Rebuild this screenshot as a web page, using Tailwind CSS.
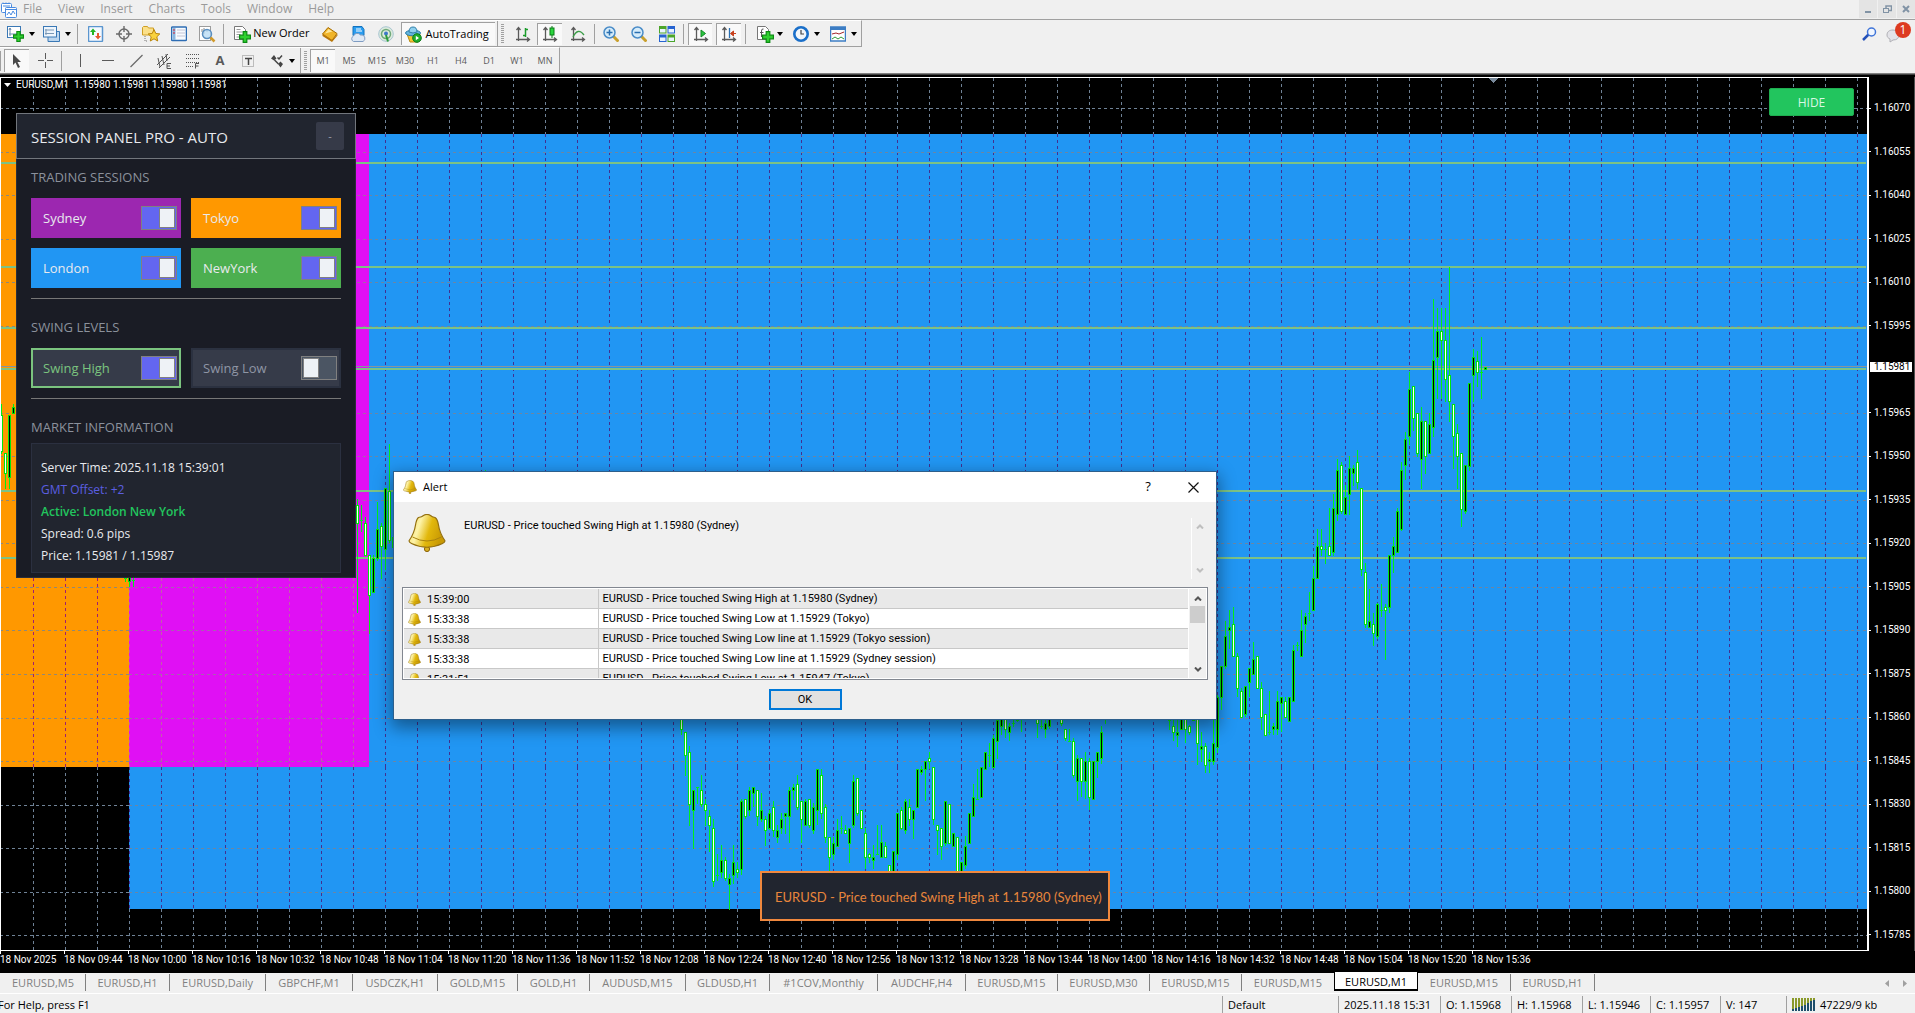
<!DOCTYPE html>
<html lang="en">
  <head>
    <meta charset="UTF-8" />
    <meta name="viewport" content="width=device-width, initial-scale=1.0" />
    <script src="https://cdn.jsdelivr.net/npm/@tailwindcss/browser@4"></script>
    <title>EURUSD,M1</title>
  </head>
  <body class="flex h-screen flex-col overflow-hidden bg-[#f0f0f0] font-['Open_Sans',sans-serif] text-[11px] text-black">
    <svg width="0" height="0" class="absolute">
      <defs>
        <linearGradient id="gold" x1="0" y1="0" x2="1" y2="0.3">
          <stop offset="0" stop-color="#f3d75a" />
          <stop offset="0.35" stop-color="#fdf3a8" />
          <stop offset="0.65" stop-color="#e2b80c" />
          <stop offset="1" stop-color="#c99a04" />
        </linearGradient>
        <symbol id="bell" viewBox="0 0 38 38">
          <circle cx="19" cy="35" r="2.6" fill="#d9b021" stroke="#8a6209" />
          <path d="M10.500 3.500Q14 3 15.500 1.500Q19 -0.500 22.500 1.500Q24 3 27 3.500Q29.500 5 30.500 11C31.500 18 33 21 36.800 26.500Q37.500 28 34.500 29.500Q19 37 3.500 29.500Q0.500 28 1.200 26.500C5 21 6.500 18 7.500 11Q8.500 5 10.500 3.500Z" fill="url(#gold)" stroke="#94700f" stroke-width="1.200" />
          <path d="M4.500 23Q19 31 33.500 23" fill="none" stroke="#a9820f" />
        </symbol>
        <symbol id="axes" viewBox="0 0 16 16">
          <path d="M3.500 2v13M1 13.500h13M1.500 4l2-2.500 2 2.500M12 11.500l2.500 2-2.500 2" fill="none" stroke="#5a5a5a" stroke-width="1.300" />
        </symbol>
        <symbol id="plus" viewBox="0 0 10 10">
          <path d="M3.500 0.500h3v3h3v3h-3v3h-3v-3h-3v-3h3z" fill="#2fd02f" stroke="#0b8a12" />
        </symbol>
      </defs>
    </svg>

    <!-- menu bar -->
    <header class="flex h-5 shrink-0 items-center border-b border-[#a0a0a0] text-[12px] text-[#9a9a9a]">
      <svg class="mr-[6px] ml-px h-4 w-4" viewBox="0 0 16 16" fill="#fff" stroke="#4a8be0">
        <rect x="0.500" y="1.500" width="10" height="9" rx="1" />
        <path d="M2 1.500v-1M5 1.500v-1M8 1.500v-1M2 4h7" />
        <rect x="4.500" y="5.500" width="11" height="10" rx="1" />
        <path d="M5 7.500h10M6 13l2-3 2 3 2-4 2 3" fill="none" />
      </svg>
      <nav class="flex gap-4 pb-0.5">
        <a href="#">File</a>
        <a href="#">View</a>
        <a href="#">Insert</a>
        <a href="#">Charts</a>
        <a href="#">Tools</a>
        <a href="#">Window</a>
        <a href="#">Help</a>
      </nav>
      <div class="ml-auto flex h-full gap-px pb-px">
        <button class="flex w-[18px] items-center justify-center bg-[#e4e4e4]" aria-label="Minimize">
          <svg width="8" height="10"><path d="M1 8h6" stroke="#8193a5" stroke-width="2" /></svg>
        </button>
        <button class="flex w-[18px] items-center justify-center bg-[#e4e4e4]" aria-label="Restore">
          <svg width="9" height="9" fill="none" stroke="#8193a5"><path d="M3 3V1h5.500v4.500H6" stroke-width="1.500" /><rect x="0.500" y="3.500" width="5" height="4" /></svg>
        </button>
        <button class="flex w-[18px] items-center justify-center bg-[#e4e4e4]" aria-label="Close">
          <svg width="8" height="8"><path d="M1 1l6 6M7 1L1 7" stroke="#8193a5" stroke-width="2" /></svg>
        </button>
      </div>
    </header>

    <!-- toolbars -->
    <div class="flex h-[54px] shrink-0 justify-between border-b border-[#808080]">
      <div class="flex flex-col">
        <div class="flex h-[27px] items-center border-t border-r border-b border-t-white border-r-[#a0a0a0] border-b-[#a0a0a0] w-[862px]">
          <button class="flex w-[38px] items-center gap-[6px] pl-[7px]" aria-label="New chart">
            <svg class="h-4 w-4 overflow-visible" viewBox="0 0 16 16">
              <rect x="0.500" y="0.500" width="13" height="11" fill="#fff" stroke="#3a78b5" />
              <path d="M3 2v8M2 8h9M2 4l1-2 1 2" stroke="#6b8cad" fill="none" />
              <use href="#plus" x="6" y="5" width="11" height="11" />
            </svg>
            <svg width="6" height="4"><path d="M0 0h6L3 4z" /></svg>
          </button>
          <button class="flex w-[37px] items-center gap-[6px] pl-[5px]" aria-label="Profiles">
            <svg class="h-4 w-4 overflow-visible" viewBox="0 0 16 16" fill="#eef5fc" stroke="#3a78b5">
              <path d="M5 5.500h11.500v10H5z" fill="#bcd6ee" />
              <rect x="0.500" y="0.500" width="13" height="10.500" />
              <path d="M3 3v6M2 7.500h9M2 4h9" stroke="#7b98b5" />
            </svg>
            <svg width="6" height="4"><path d="M0 0h6L3 4z" /></svg>
          </button>
          <i class="mr-1 ml-0.5 h-5 w-px bg-[#a0a0a0]"></i>
          <button class="flex w-7 justify-center" aria-label="Market Watch">
            <svg class="h-4 w-4" viewBox="0 0 16 16">
              <rect x="0.500" y="0.500" width="14" height="15" rx="1" fill="#f4f9ff" stroke="#5b96cf" stroke-width="1.500" />
              <path d="M5 2.500L8 6H6v3H4V6H2z" fill="#22b322" />
              <path d="M10 13.500L7 10h2V7h2v3h2z" fill="#e4572e" />
            </svg>
          </button>
          <button class="flex w-7 justify-center" aria-label="Data Window">
            <svg class="h-4 w-4" viewBox="0 0 16 16" fill="none" stroke="#6a6a6a" stroke-width="1.400">
              <circle cx="8" cy="8" r="5" /><path d="M8 0v6M8 10v6M0 8h6M10 8h6" />
            </svg>
          </button>
          <button class="flex w-7 justify-center" aria-label="Navigator">
            <svg class="h-4 w-[18px]" viewBox="0 0 18 16">
              <path d="M0.500 9V1.500l1-1h4l1 1.500h5V9z" fill="#fbe08a" stroke="#cf9f24" />
              <path d="M3 10v5h3" stroke="#777" fill="none" stroke-dasharray="1 1" />
              <path d="M12 3.500l1.800 4 4 .4-3 2.900.9 4.200-3.700-2.200-3.700 2.200.9-4.200-3-2.900 4-.4z" fill="#fad23c" stroke="#b98409" />
            </svg>
          </button>
          <button class="flex w-7 justify-center" aria-label="Terminal">
            <svg class="h-4 w-4" viewBox="0 0 16 16">
              <rect x="0.500" y="1" width="15" height="13.500" rx="1" fill="#f7fbff" stroke="#2e6db4" stroke-width="1.500" />
              <path d="M3 2v12" stroke="#8ab6df" stroke-width="3" />
              <path d="M6 4h8M6 7h8M6 10h8" stroke="#c5c5d5" /><path d="M2 4h2M2 7h2" stroke="#d23" />
            </svg>
          </button>
          <button class="flex w-7 justify-center" aria-label="Strategy Tester">
            <svg class="h-4 w-4 overflow-visible" viewBox="0 0 16 16">
              <rect x="0.500" y="0.500" width="11" height="14" fill="#fff" stroke="#9c9c9c" />
              <path d="M3 3v3M5 2v6M8 3v3" stroke="#888" />
              <circle cx="8" cy="8" r="4.500" fill="#b9dcf5cc" stroke="#5a8fc0" stroke-width="1.500" />
              <path d="M11.500 11.500l4 4" stroke="#d19a2a" stroke-width="2.500" />
            </svg>
          </button>
          <i class="mx-0.5 h-5 w-px bg-[#a0a0a0]"></i>
          <button class="flex w-[90px] items-center gap-[3px] pl-2 text-[11px]">
            <svg class="h-4 w-4 overflow-visible" viewBox="0 0 16 16">
              <path d="M0.500 0.500h8l3 3v10h-11z" fill="#fff" stroke="#777" />
              <path d="M2.500 3.500h4M2.500 6h6M2.500 8.500h4M2.500 11h3" stroke="#999" />
              <use href="#plus" x="5" y="5" width="12" height="12" />
            </svg>
            <span class="whitespace-nowrap">New Order</span>
          </button>
          <button class="flex w-7 justify-center" aria-label="MetaEditor">
            <svg class="h-4 w-4" viewBox="0 0 16 16">
              <path d="M0.500 8L6 1.500l9 6L10 14.500z" fill="#f0b429" stroke="#a86f06" />
              <path d="M0.500 8v2L10 16l5.500-6.500V8L10 14z" fill="#b9770a" />
              <path d="M3 7.500L6.500 3l4 2.500z" fill="#ffe79a" />
            </svg>
          </button>
          <button class="flex w-7 justify-center" aria-label="Cloud">
            <svg class="h-4 w-4" viewBox="0 0 16 16">
              <path d="M3 0.500h9l2 3v6H3z" fill="#2a9df0" stroke="#1372bd" />
              <path d="M6 3h5M6 5h6" stroke="#fff" />
              <path d="M3.500 15.500a3 3 0 0 1 0-5.500 4 4 0 0 1 7-1 3.500 3.500 0 0 1 2.500 6.500z" fill="#dfe9f5" stroke="#7f9cc2" />
            </svg>
          </button>
          <button class="flex w-7 justify-center" aria-label="Signals">
            <svg class="h-4 w-4" viewBox="0 0 16 16" fill="none">
              <circle cx="8" cy="8" r="7.300" fill="#dcebdc" stroke="#a9c5d2" />
              <circle cx="8" cy="8" r="4.500" stroke="#6fa97a" stroke-width="1.500" />
              <circle cx="8" cy="7.500" r="2" fill="#3d77c9" /><path d="M8 9l2 6.500" stroke="#2d9b3a" stroke-width="2" />
            </svg>
          </button>
          <button class="ml-px flex h-[23px] w-[95px] items-center gap-1 border-t border-l border-[#a0a0a0] bg-[#f9f9f9] pl-[3px] text-[11px]">
            <svg class="h-[17px] w-[17px]" viewBox="0 0 17 17">
              <path d="M2 8l3 8h8l2-8z" fill="#f3c632" stroke="#b98b12" />
              <ellipse cx="8" cy="7" rx="7.500" ry="2.800" fill="#63b5df" stroke="#2e7ea8" />
              <path d="M4 6q0-5 4-5t4 5q-4 2-8 0z" fill="#8fd0ee" stroke="#2e7ea8" />
              <circle cx="12" cy="12" r="4.300" fill="#1fae2c" stroke="#0c7a17" /><path d="M10.800 9.800l3.200 2.200-3.200 2.200z" fill="#fff" />
            </svg>
            AutoTrading
          </button>
          <i class="ml-0.5 h-[25px] w-px bg-[#a0a0a0]"></i>
          <i class="mr-[5px] ml-[3px] h-5 w-[3px] bg-[repeating-linear-gradient(#a0a0a0_0_1px,transparent_1px_2px)]"></i>
          <button class="flex w-7 justify-center" aria-label="Bar chart">
            <svg class="h-4 w-4" viewBox="0 0 16 16"><use href="#axes" /><path d="M10.500 2v9M10 3.500h3M8 9.500h2.500" stroke="#1a9c2a" stroke-width="1.500" /></svg>
          </button>
          <button class="flex h-[22px] w-[25px] items-center justify-center border-t border-l border-[#a0a0a0] bg-[#f9f9f9]" aria-label="Candlesticks">
            <svg class="h-4 w-4" viewBox="0 0 16 16"><use href="#axes" /><path d="M10 0v12" stroke="#0b7a17" /><rect x="8" y="2" width="4" height="7" fill="#29d63d" stroke="#0b7a17" /></svg>
          </button>
          <button class="flex w-8 justify-center" aria-label="Line chart">
            <svg class="h-4 w-4" viewBox="0 0 16 16"><use href="#axes" /><path d="M3 11Q8 1 14 9" fill="none" stroke="#3a9c46" stroke-width="1.300" /></svg>
          </button>
          <i class="mr-0.5 h-5 w-px bg-[#a0a0a0]"></i>
          <button class="flex w-7 justify-center" aria-label="Zoom in">
            <svg class="h-4 w-4" viewBox="0 0 16 16"><path d="M10 10l5.500 5.500" stroke="#c9a02c" stroke-width="3" /><circle cx="6.500" cy="6.500" r="5.500" fill="#d6ecfa" stroke="#4a8cc7" stroke-width="1.500" /><path d="M3.500 6.500h6M6.500 3.500v6" stroke="#2a6fb0" stroke-width="1.500" /></svg>
          </button>
          <button class="flex w-7 justify-center" aria-label="Zoom out">
            <svg class="h-4 w-4" viewBox="0 0 16 16"><path d="M10 10l5.500 5.500" stroke="#c9a02c" stroke-width="3" /><circle cx="6.500" cy="6.500" r="5.500" fill="#d6ecfa" stroke="#4a8cc7" stroke-width="1.500" /><path d="M3.500 6.500h6" stroke="#2a6fb0" stroke-width="1.500" /></svg>
          </button>
          <button class="flex w-7 justify-center" aria-label="Tile windows">
            <svg class="h-4 w-4" viewBox="0 0 16 16">
              <path d="M0 0h7.500v7.500H0zM8.500 8.500H16V16H8.500z" fill="#4ca52a" /><path d="M8.500 0H16v7.500H8.500zM0 8.500h7.500V16H0z" fill="#2663d0" />
              <path d="M1 3h5.500v3.500H1zM9.500 3H15v3.500H9.500zM1 11.500h5.500V15H1zM9.500 11.500H15V15H9.500z" fill="#e9f3ff" />
            </svg>
          </button>
          <i class="mr-1 ml-0.5 h-5 w-px bg-[#a0a0a0]"></i>
          <button class="flex h-[22px] w-[25px] items-center justify-center border-t border-l border-[#a0a0a0] bg-[#f9f9f9]" aria-label="Auto scroll">
            <svg class="h-4 w-4" viewBox="0 0 16 16"><use href="#axes" /><path d="M8 4l4.500 3.500L8 11z" fill="#2bc540" stroke="#178a28" /></svg>
          </button>
          <button class="ml-1 flex h-[22px] w-[25px] items-center justify-center border-t border-l border-[#a0a0a0] bg-[#f9f9f9]" aria-label="Chart shift">
            <svg class="h-4 w-4" viewBox="0 0 16 16"><use href="#axes" /><path d="M8.500 2v10" stroke="#2a6fb0" stroke-width="1.300" /><path d="M15 7.500h-4M12.500 5l-3 2.500 3 2.500z" fill="#c8401c" stroke="#c8401c" /></svg>
          </button>
          <i class="mx-1 h-5 w-px bg-[#a0a0a0]"></i>
          <button class="flex w-[37px] items-center gap-1 pl-[7px]" aria-label="Indicators">
            <svg class="h-4 w-4 overflow-visible" viewBox="0 0 16 16">
              <path d="M0.500 0.500h8l3 3v10h-11z" fill="#fff" stroke="#777" /><path d="M6.500 3q-2-.5-2 2v6M3 6.500h3.500" fill="none" stroke="#555" />
              <use href="#plus" x="5" y="5" width="12" height="12" />
            </svg>
            <svg width="6" height="4"><path d="M0 0h6L3 4z" /></svg>
          </button>
          <button class="flex w-[37px] items-center gap-[5px] pl-[6px]" aria-label="Periods">
            <svg class="h-4 w-4" viewBox="0 0 16 16"><circle cx="8" cy="8" r="6.700" fill="#f2f6fa" stroke="#1a6fc9" stroke-width="2.600" /><path d="M8 4v4h3" fill="none" stroke="#444" stroke-width="1.200" /></svg>
            <svg width="6" height="4"><path d="M0 0h6L3 4z" /></svg>
          </button>
          <button class="flex w-[37px] items-center gap-[5px] pl-[6px]" aria-label="Templates">
            <svg class="h-4 w-4" viewBox="0 0 16 16"><rect x="0.500" y="1" width="15" height="14" fill="#fff" stroke="#3c7dc4" stroke-width="1.500" /><path d="M0 2.500h16" stroke="#3c7dc4" stroke-width="3" /><path d="M2 8l4-1 3 1 5-2" stroke="#a3262a" fill="none" /><path d="M2 13l3-2 3 2 3-2 3 2" stroke="#2f9c3b" fill="none" /></svg>
            <svg width="6" height="4"><path d="M0 0h6L3 4z" /></svg>
          </button>
        </div>

        <div class="flex h-[26px] w-[560px] items-center border-t border-r border-t-white border-r-[#a0a0a0] text-[#5a5a5a]">
          <i class="h-5 w-px bg-[#a0a0a0]"></i>
          <button class="ml-[3px] flex h-[23px] w-[25px] items-center justify-center border-t border-l border-[#a0a0a0] bg-[#f9f9f9]" aria-label="Cursor">
            <svg width="10" height="15"><path d="M1 0v11l2.500-2.500L6 14l2-1-2.500-5H9z" fill="#4a4a4a" /></svg>
          </button>
          <button class="ml-0.5 flex w-7 justify-center" aria-label="Crosshair">
            <svg width="15" height="15" stroke="#5a5a5a"><path d="M7.500 0v6M7.500 9v6M0 7.500h6M9 7.500h6" /></svg>
          </button>
          <i class="mr-1 ml-0.5 h-5 w-px bg-[#a0a0a0]"></i>
          <button class="flex w-7 justify-center" aria-label="Vertical line"><svg width="3" height="15"><path d="M1.500 1v13" stroke="#5a5a5a" /></svg></button>
          <button class="flex w-7 justify-center" aria-label="Horizontal line"><svg width="12" height="15"><path d="M0 7.500h12" stroke="#5a5a5a" /></svg></button>
          <button class="flex w-7 justify-center" aria-label="Trendline"><svg width="13" height="14"><path d="M0.500 13L12.500 1" stroke="#6a6a6a" stroke-width="1.300" /></svg></button>
          <button class="flex w-7 justify-center" aria-label="Channel">
            <svg width="16" height="16" stroke="#555" class="overflow-visible"><path d="M1 12L12 1M3 15L14 4M2 5l2 9M6 3l2 9M10 1l1 7" /><path d="M15 10.500h-4v5h4M11 13h3" fill="none" /></svg>
          </button>
          <button class="flex w-7 justify-center" aria-label="Fibonacci">
            <svg width="15" height="16" stroke="#555"><path d="M1 1.500h13M1 5.500h13M1 9.500h13M1 13.500h7" stroke-dasharray="1 1" /><path d="M14 10.500h-3.500v5M10.500 13h3" fill="none" /></svg>
          </button>
          <button class="w-7 text-[13px] leading-none font-bold">A</button>
          <button class="flex w-7 justify-center" aria-label="Text label">
            <svg width="13" height="14"><rect x="0.500" y="1.500" width="11" height="11" fill="none" stroke="#888" stroke-dasharray="1 1" /><path d="M3 4.500h7M6.500 4v7" stroke="#444" stroke-width="1.500" /></svg>
          </button>
          <button class="flex w-9 items-center gap-[5px] pl-2" aria-label="Arrows">
            <svg width="14" height="14" fill="#444"><path d="M1 4.500L4 1l2.500 3.500L4 6.500zM8 10l2.500-2.500L13 10l-2.500 3.500z" /><path d="M4.500 6l4 4M7.500 3.500l1.500 1.500 3-3.500" fill="none" stroke="#444" stroke-width="1.500" /></svg>
            <svg width="6" height="4"><path d="M0 0h6L3 4z" /></svg>
          </button>
          <i class="ml-0.5 h-[25px] w-px bg-[#a0a0a0]"></i>
          <i class="mr-[3px] ml-[3px] h-5 w-[3px] bg-[repeating-linear-gradient(#a0a0a0_0_1px,transparent_1px_2px)]"></i>
          <div class="flex flex-1 items-center text-[9px] font-medium">
            <button class="h-[23px] w-[25px] border-t border-l border-[#a0a0a0] bg-[#f9f9f9]">M1</button>
            <button class="w-7">M5</button>
            <button class="w-7">M15</button>
            <button class="w-7">M30</button>
            <button class="w-7">H1</button>
            <button class="w-7">H4</button>
            <button class="w-7">D1</button>
            <button class="w-7">W1</button>
            <button class="w-7">MN</button>
          </div>
        </div>
      </div>
      <div class="flex items-start gap-2 pt-[3px] pr-[4px]">
        <button aria-label="Search" class="pt-1">
          <svg width="15" height="14" fill="none"><path d="M1 13l6-6" stroke="#2450b8" stroke-width="2.500" /><circle cx="9.500" cy="5" r="4" fill="#f0f6ff" stroke="#3f74d8" stroke-width="1.500" /></svg>
        </button>
        <button aria-label="Messages" class="relative h-5 w-[26px]">
          <svg class="absolute top-[6px] left-px" width="14" height="14"><path d="M7 1c4 0 6 2 6 5s-2 5-6 5l-3 2 0-3C2 9 1 8 1 6c0-3 2-5 6-5z" fill="#e3e3e8" stroke="#b0b0b6" /></svg>
          <span class="absolute -top-px right-0 flex h-4 w-4 items-center justify-center rounded-full bg-[#dd3a20] text-[12px] leading-none text-white">1</span>
        </button>
      </div>
    </div>

    <!-- chart window -->
    <main class="relative grid min-h-0 flex-1 grid-cols-[1fr_46px] grid-rows-[1fr_20px] border-t border-[#404040] bg-black pt-[2px] text-white">
      <div class="relative min-h-0 overflow-hidden border-t border-r-2 border-b border-l border-white">
        <svg id="plot" class="absolute inset-0 h-full w-full" shape-rendering="crispEdges"></svg>
        <div class="absolute top-0 left-[3px] flex items-center gap-[5px] font-['Roboto',sans-serif] text-[10px] leading-[14px] whitespace-pre">
          <svg width="7" height="4"><path d="M0 0h7L3.500 4z" fill="#fff" /></svg>
          <span>EURUSD,M1  1.15980 1.15981 1.15980 1.15981</span>
        </div>
        <button class="absolute top-[10px] right-[13px] h-7 w-[85px] rounded-xs border border-[#1fae50] bg-[#22c55e] pt-px text-[12px] font-medium text-[#d8f7e3]">HIDE</button>
      </div>

      <div class="relative flex flex-col justify-between border-r border-[#505050] pt-[26px] pb-[11px] font-['Roboto',sans-serif] text-[10px] leading-[10px]" id="prices"></div>

      <div class="col-span-2 flex overflow-hidden font-['Roboto',sans-serif] text-[10px] leading-[12px]" id="times"></div>

      <!-- session panel -->
      <section class="absolute top-[38px] left-4 flex h-[465px] w-[340px] flex-col border border-[#2a2e3a] bg-[#1a1c25] text-[#e8eaee]">
        <div class="-m-px flex h-[46px] shrink-0 items-center justify-between border border-[#72767c] bg-[#21252f] pr-[11px] pl-[14px]">
          <h1 class="pt-0.5 text-[15px] font-medium">SESSION PANEL PRO - AUTO</h1>
          <button class="h-7 w-7 rounded-xs bg-[#363a48] text-[11px] text-[#9aa0ac]">-</button>
        </div>
        <div class="flex flex-col px-[14px]">
          <h2 class="flex h-[40px] items-center text-[13px] text-[#8b919c]">TRADING SESSIONS</h2>
          <div class="grid grid-cols-2 gap-[10px] text-[13px] font-medium">
            <label class="flex h-10 items-center justify-between bg-[#9c27b0] pt-0.5 pr-1 pl-3">Sydney
              <input type="checkbox" checked class="mb-0.5 h-6 w-9 appearance-none border border-[#808080] bg-[#6366f1] pl-[17px] before:mt-px before:block before:h-5 before:w-4 before:border before:border-[#808080] before:bg-[#eef2f6] before:content-['']" /></label>
            <label class="flex h-10 items-center justify-between bg-[#ff9800] pt-0.5 pr-1 pl-3">Tokyo
              <input type="checkbox" checked class="mb-0.5 h-6 w-9 appearance-none border border-[#808080] bg-[#6366f1] pl-[17px] before:mt-px before:block before:h-5 before:w-4 before:border before:border-[#808080] before:bg-[#eef2f6] before:content-['']" /></label>
            <label class="flex h-10 items-center justify-between bg-[#2196f3] pt-0.5 pr-1 pl-3">London
              <input type="checkbox" checked class="mb-0.5 h-6 w-9 appearance-none border border-[#808080] bg-[#6366f1] pl-[17px] before:mt-px before:block before:h-5 before:w-4 before:border before:border-[#808080] before:bg-[#eef2f6] before:content-['']" /></label>
            <label class="flex h-10 items-center justify-between bg-[#4caf50] pt-0.5 pr-1 pl-3">NewYork
              <input type="checkbox" checked class="mb-0.5 h-6 w-9 appearance-none border border-[#808080] bg-[#6366f1] pl-[17px] before:mt-px before:block before:h-5 before:w-4 before:border before:border-[#808080] before:bg-[#eef2f6] before:content-['']" /></label>
          </div>
          <hr class="mt-[10px] border-[#777777]" />
          <h2 class="mt-[9px] flex h-[40px] items-center text-[13px] text-[#8b919c]">SWING LEVELS</h2>
          <div class="grid grid-cols-2 gap-[10px] text-[13px] font-medium">
            <label class="flex h-10 items-center justify-between border-2 border-[#7bc47f] bg-[#363b49] pt-0.5 pr-0.5 pl-[10px] text-[#7bc47f]">Swing High
              <input type="checkbox" checked class="mb-0.5 h-6 w-9 appearance-none border border-[#808080] bg-[#6366f1] pl-[17px] before:mt-px before:block before:h-5 before:w-4 before:border before:border-[#808080] before:bg-[#eef2f6] before:content-['']" /></label>
            <label class="flex h-10 items-center justify-between border-2 border-[#2b3140] bg-[#363b49] pt-0.5 pr-0.5 pl-[10px] text-[#8f96a5]">Swing Low
              <input type="checkbox" class="mb-0.5 h-6 w-9 appearance-none border border-[#808080] bg-[#4b5563] pl-px before:mt-px before:block before:h-5 before:w-4 before:border before:border-[#808080] before:bg-[#eef2f6] before:content-['']" /></label>
          </div>
          <hr class="mt-[10px] border-[#777777]" />
          <h2 class="mt-[9px] flex h-[35px] items-center pt-1 text-[13px] text-[#8b919c]">MARKET INFORMATION</h2>
          <div class="flex h-[130px] flex-col border border-[#2b3040] bg-[#21252f] pt-[13px] pl-[9px] text-[12px] leading-[22px]">
            <p>Server Time: 2025.11.18 15:39:01</p>
            <p class="text-[#5b5ee0]">GMT Offset: +2</p>
            <p class="font-semibold text-[#22c55e]">Active: London New York</p>
            <p>Spread: 0.6 pips</p>
            <p>Price: 1.15981 / 1.15987</p>
          </div>
        </div>
      </section>

      <!-- on-chart notification -->
      <div class="absolute top-[796px] left-[760px] flex h-[50px] w-[350px] items-center border-2 border-[#f0883e] bg-[#21252f] pt-1 pl-[13px] font-['Lato',sans-serif] text-[13px] whitespace-nowrap text-[#e8853c]">EURUSD - Price touched Swing High at 1.15980 (Sydney)</div>

      <!-- alert window -->
      <div role="dialog" aria-label="Alert" class="absolute top-[396px] left-[393px] flex h-[249px] w-[824px] flex-col border border-[#2d5f8c] bg-[#f0f0f0] font-['Roboto',sans-serif] text-[11px] text-black shadow-[0_6px_16px_2px_rgba(0,0,0,0.4)]">
        <div class="flex h-[30px] shrink-0 items-center bg-white pr-[17px] pl-[9px]">
          <svg class="mr-[6px] h-[14px] w-[14px]"><use href="#bell" /></svg>
          <span class="flex-1 font-['Open_Sans',sans-serif]">Alert</span>
          <button class="w-[10px] font-['Open_Sans',sans-serif] text-[13px] font-medium">?</button>
          <button class="ml-[35px]" aria-label="Close"><svg width="11" height="11"><path d="M0.500 0.500l10 10M10.500 0.500l-10 10" stroke="#111" stroke-width="1.200" /></svg></button>
        </div>
        <div class="flex h-[85px] shrink-0 pt-3 pr-[8px] pl-[14px]">
          <svg class="h-[38px] w-[38px]"><use href="#bell" /></svg>
          <p class="flex-1 pt-1 pl-[18px] leading-[16px]">EURUSD - Price touched Swing High at 1.15980 (Sydney)</p>
          <div class="mt-1 flex h-[61px] w-[17px] flex-col items-center justify-between border-l border-white py-[6px]">
            <svg width="8" height="5" fill="none" stroke="#bfbfbf" stroke-width="2"><path d="M1 4.500l3-3 3 3" /></svg>
            <svg width="8" height="5" fill="none" stroke="#bfbfbf" stroke-width="2"><path d="M1 0.500l3 3 3-3" /></svg>
          </div>
        </div>
        <div class="mx-2 flex h-[93px] shrink-0 overflow-hidden border border-[#828790] bg-white p-px">
          <div class="flex-1 overflow-hidden">
            <table class="w-full table-fixed border-collapse leading-[19px]">
              <colgroup><col class="w-[194px]" /><col /></colgroup>
              <tbody id="alerts"></tbody>
            </table>
          </div>
          <div class="ml-px flex w-[17px] flex-col items-center bg-[#f0f0f0] pt-[7px] pb-[6px]">
            <svg width="8" height="5" fill="none" stroke="#555" stroke-width="2"><path d="M1 4.500l3-3 3 3" /></svg>
            <i class="mt-[5px] h-[17px] w-[15px] bg-[#cdcdcd]"></i>
            <svg class="mt-auto" width="8" height="5" fill="none" stroke="#555" stroke-width="2"><path d="M1 0.500l3 3 3-3" /></svg>
          </div>
        </div>
        <button class="mt-[9px] h-[21px] w-[73px] self-center border-2 border-[#0078d7] bg-[#e1e1e1] leading-none">OK</button>
      </div>
    </main>

    <!-- chart tabs -->
    <nav class="flex h-[22px] shrink-0 items-start border-t-2 border-black bg-[#f0f0f0] text-[11px] leading-[17px] text-[#808080] outline outline-white">
      <a href="#" class="my-px w-[86px] border-r border-[#808080] pl-3">EURUSD,M5</a>
      <a href="#" class="my-px w-[84px] border-r border-[#808080] text-center">EURUSD,H1</a>
      <a href="#" class="my-px w-[96px] border-r border-[#808080] text-center">EURUSD,Daily</a>
      <a href="#" class="my-px w-[87px] border-r border-[#808080] text-center">GBPCHF,M1</a>
      <a href="#" class="my-px w-[85px] border-r border-[#808080] text-center">USDCZK,H1</a>
      <a href="#" class="my-px w-[80px] border-r border-[#808080] text-center">GOLD,M15</a>
      <a href="#" class="my-px w-[72px] border-r border-[#808080] text-center">GOLD,H1</a>
      <a href="#" class="my-px w-[96px] border-r border-[#808080] text-center">AUDUSD,M15</a>
      <a href="#" class="my-px w-[84px] border-r border-[#808080] text-center">GLDUSD,H1</a>
      <a href="#" class="my-px w-[108px] border-r border-[#808080] text-center">#1COV,Monthly</a>
      <a href="#" class="my-px w-[88px] border-r border-[#808080] text-center">AUDCHF,H4</a>
      <a href="#" class="my-px w-[92px] border-r border-[#808080] text-center">EURUSD,M15</a>
      <a href="#" class="my-px w-[92px] border-r border-[#808080] text-center">EURUSD,M30</a>
      <a href="#" class="my-px w-[92px] border-r border-[#808080] text-center">EURUSD,M15</a>
      <a href="#" class="my-px w-[92px] text-center">EURUSD,M15</a>
      <a href="#" class="-mt-px h-[19px] w-[84px] border border-t-0 border-b-2 border-black bg-white pt-0.5 text-center leading-[16px] text-black">EURUSD,M1</a>
      <a href="#" class="my-px w-[93px] border-r border-[#808080] text-center">EURUSD,M15</a>
      <a href="#" class="my-px w-[84px] border-r border-[#808080] text-center">EURUSD,H1</a>
      <div class="mr-2 ml-auto flex h-full items-center gap-[14px]">
        <svg width="4" height="7"><path d="M4 0v7L0 3.500z" fill="#a0a0a0" /></svg>
        <svg width="4" height="7"><path d="M0 0v7l4-3.500z" fill="#a0a0a0" /></svg>
      </div>
    </nav>

    <!-- status bar -->
    <footer class="flex h-5 shrink-0 items-stretch pt-[3px] text-[11px] leading-[18px] whitespace-nowrap">
      <span class="-ml-0.5 flex-1">For Help, press F1</span>
      <span class="w-[116px] border-l border-[#a0a0a0] pl-[5px]">Default</span>
      <span class="w-[102px] border-l border-[#a0a0a0] pl-[5px]">2025.11.18 15:31</span>
      <span class="w-[71px] border-l border-[#a0a0a0] pl-[5px]">O: 1.15968</span>
      <span class="w-[71px] border-l border-[#a0a0a0] pl-[5px]">H: 1.15968</span>
      <span class="w-[68px] border-l border-[#a0a0a0] pl-[5px]">L: 1.15946</span>
      <span class="w-[70px] border-l border-[#a0a0a0] pl-[5px]">C: 1.15957</span>
      <span class="w-[66px] border-l border-[#a0a0a0] pl-[5px]">V: 147</span>
      <span class="flex w-[129px] items-center gap-1 border-l border-[#a0a0a0] pl-[5px]">
        <svg width="24" height="13" shape-rendering="crispEdges" stroke-width="2">
          <path d="M1 0v11M4 0v10M7 0v9M10 0v8M13 0v7M16 0v5M19 0v3M22 0v2" stroke="#8a9a2a" />
          <path d="M1 11v2M4 10v3M7 9v4M10 8v5M13 7v6M16 5v8M19 3v10M22 2v11" stroke="#1d4e6b" />
        </svg>
        47229/9 kb
      </span>
    </footer>

    <script>
      // x, high, body top, body bottom, low, type (w = down, b = up, d = doji)
      const candles = `1 404 415 451 454 w|5 453 453 473 489 w|9 415 415 477 489 b|13 404 407 413 413 b|125 578 578 580 582 d|129 570 570 581 587 b|133 575 580 580 587 d
357 499 505 523 613 w|361 505 520 520 532 d|365 517 523 555 555 w|369 555 555 595 634 w|373 555 558 592 592 b|377 502 529 558 561 b|381 523 526 546 579 w|385 488 488 549 570 b|389 444 491 540 543 w|393 530 537 547 575 w|485 470 480 480 490 d
681 700 700 729 735 w|685 732 732 755 776 w|689 746 752 804 826 w|693 790 790 810 849 b|697 787 787 787 804 d|701 775 790 804 807 w|705 799 804 810 826 w|709 810 816 825 852 w|713 819 828 881 887 w|717 854 875 875 881 d|721 845 860 872 878 b|725 857 860 878 881 w|729 874 878 884 910 b|733 845 862 875 884 b|737 862 869 872 878 w|741 799 801 869 875 b|745 799 799 816 819 w|749 787 790 810 816 b|753 787 787 793 807 b|757 790 790 816 826 w|761 793 810 819 822 b|765 816 819 830 846 w|769 810 813 828 830 b|773 801 807 830 837 w|777 825 830 837 843 b|781 813 819 828 834 b|785 813 813 816 834 b|789 787 790 816 843 b|793 784 787 790 800 b|797 775 784 807 810 w|801 801 801 819 843 w|805 799 801 825 825 b|809 799 799 825 828 w|813 803 807 830 834 b|817 769 769 810 825 b|821 769 775 813 819 w|825 804 807 837 843 w|829 837 837 857 877 w|833 837 843 854 860 b|837 819 830 846 846 b|841 816 828 828 834 d|845 825 830 833 833 w|849 828 828 843 863 b|853 775 781 825 828 b|857 778 778 813 816 w|861 810 810 828 828 w|865 828 833 857 869 w|869 853 854 857 863 w|873 845 857 860 869 b|877 825 854 854 855 d|881 825 842 857 857 b|885 842 846 857 857 w|889 865 865 875 875 w|893 851 851 875 875 b|897 813 813 854 860 b|901 807 810 828 830 w|905 799 801 830 834 b|909 799 807 819 826 w|913 810 810 819 839 b|917 769 769 807 808 b|921 766 769 772 775 b|925 761 761 769 801 b|929 752 758 761 769 w|933 767 767 819 825 w|937 825 825 830 855 w|941 828 828 846 860 w|945 801 801 843 846 b|949 804 804 843 843 w|953 833 833 846 846 b|957 837 837 875 875 w|961 862 862 875 875 b|965 836 846 865 869 b|969 813 813 843 843 b|973 784 797 816 816 b|977 769 799 799 800 d|981 767 767 797 797 b|985 752 752 769 769 b|989 743 755 755 767 d|993 735 738 767 767 b|997 710 720 741 759 b|1001 700 715 726 735 b|1005 700 710 729 738 w|1009 723 726 732 741 b|1013 715 723 723 727 d|1017 710 715 720 722 b|1021 700 705 710 732 w|1037 710 715 723 738 w|1041 720 726 726 729 d|1045 720 723 729 738 b|1049 700 710 726 729 b|1061 700 715 723 726 w|1065 729 729 738 741 w|1069 729 741 741 742 d|1073 738 741 775 778 w|1077 755 758 781 801 b|1081 758 758 781 797 w|1085 752 761 781 799 b|1089 758 761 797 810 w|1093 761 761 799 799 b|1097 752 752 761 778 b|1101 726 732 758 764 b|1105 700 710 710 724 d
1169 700 720 720 730 d|1173 720 726 732 741 w|1177 720 732 735 747 b|1181 700 700 729 729 b|1185 700 700 729 743 w|1189 725 726 732 735 w|1193 700 715 720 720 b|1197 700 715 743 765 w|1201 732 746 749 762 b|1205 743 746 765 773 w|1209 752 759 761 773 b|1213 719 743 761 765 b|1217 695 697 747 753 b|1221 666 666 697 710 b|1225 621 636 666 669 b|1229 610 627 630 649 b|1233 607 624 656 656 w|1237 653 656 688 697 w|1241 688 691 717 718 w|1245 686 686 714 717 b|1249 668 668 682 697 b|1253 642 659 674 675 b|1257 656 656 688 688 w|1261 682 688 717 730 w|1265 714 714 735 735 w|1269 691 732 732 735 d|1273 723 726 729 735 b|1277 691 701 729 735 b|1281 697 697 703 732 b|1285 697 701 717 717 w|1289 697 697 721 721 b|1293 645 650 701 701 b|1297 642 645 645 651 d|1301 610 630 656 656 b|1305 613 616 624 643 b|1309 592 613 613 621 d|1313 566 578 610 610 b|1317 529 546 578 578 b|1321 529 546 549 556 w|1325 543 549 549 564 d|1329 508 546 555 556 w|1333 494 508 552 556 b|1337 459 470 514 521 b|1341 462 465 511 514 w|1345 485 497 514 514 b|1349 456 468 494 515 b|1353 465 468 473 486 b|1357 450 462 482 489 w|1361 488 488 569 576 w|1365 563 572 624 628 w|1369 589 621 627 627 b|1373 613 624 633 646 w|1377 603 604 636 639 b|1381 584 610 610 617 d|1385 604 607 610 660 w|1389 555 555 607 613 b|1393 537 546 555 573 b|1397 508 511 552 552 b|1401 462 470 529 531 b|1405 432 439 465 480 b
1409 372 389 436 445 b|1413 386 386 418 431 w|1417 413 413 453 457 w|1421 407 421 459 489 b|1425 421 421 456 474 w|1429 413 424 453 453 b|1433 299 360 427 437 b|1437 308 331 357 399 b|1441 308 331 340 399 w|1445 308 340 379 402 w|1449 267 375 401 422 w|1453 404 404 436 469 w|1457 424 433 456 489 w|1461 453 453 509 527 w|1465 465 465 511 514 b|1469 383 383 466 471 b|1473 349 357 375 402 b|1477 351 361 372 387 w|1481 337 372 372 399 d|1485 367 367 369 369 b`;

      const slate = "#6f8296";
      const line = (x1, y1, x2, y2, color, dash) =>
        `<path d="M${x1} ${y1}L${x2} ${y2}" stroke="${color}"${dash ? ' stroke-dasharray="3 3"' : ""}/>`;
      let out = `
        <rect x="0" y="134" width="129" height="633" fill="#ff9800"/>
        <rect x="129" y="134" width="100%" height="775" fill="#2196f3"/>
        <rect x="129" y="134" width="240" height="633" fill="#e010f4"/>`;

      for (let x = 33; x < 2600; x += 32) {
        const c = x + 0.5;
        out += line(c, 78, c, 134, slate, true);
        if (x < 129) {
          out += line(c, 134, c, 767, "#a01f70", true) + line(c, 767, c, 950, slate, true);
        } else {
          out += line(c, 134, c, 767, x < 369 ? "#c060a8" : "#432f90", true);
          out += line(c, 767, c, 909, "#432f90", true) + line(c, 909, c, 950, slate, true);
        }
      }

      for (let i = 0; i < 20; i++) {
        const y = Math.round(108 + i * 43.54) + 0.5;
        if (y < 134 || y > 909) {
          out += line(0, y, 2600, y, slate, true);
        } else {
          out += line(0, y, 129, y, y < 767 ? "#8f8878" : slate, true);
          out += line(129, y, 369, y, y < 767 ? "#a860b0" : "#6b86a4", true);
          out += line(369, y, 2600, y, "#6b86a4", true);
        }
      }

      out += line(0, 366.5, 2600, 366.5, "#8496a0");
      [162, 266, 327, 368, 490, 557].forEach(y => {
        out += `<rect x="0" y="${y}" width="100%" height="2" fill="#7cc285"/>`;
      });

      candles.split(/[|\n]/).forEach(row => {
        const [x, high, top, bottom, low, type] = row.trim().split(" ");
        out += line(+x + 0.5, high, +x + 0.5, low, "#00f018");
        if (type === "d") {
          out += line(x - 1, +top + 0.5, +x + 2, +top + 0.5, "#00f018");
        } else {
          out += `<rect x="${x - 0.5}" y="${+top + 0.5}" width="2" height="${bottom - top}" fill="none" stroke="#00e60c"/>`;
          out += line(+x + 0.5, +top + 1, +x + 0.5, bottom, type === "w" ? "#fff" : "#000");
        }
      });
      out += `<path d="M1488 78h10l-5 5z" fill="#778899"/>`;
      document.getElementById("plot").innerHTML = `<g transform="translate(-1 -78)">${out}</g>`;

      let prices = "";
      for (let p = 116070; p >= 115785; p -= 15) {
        prices += p === 115980
          ? `<div class="flex h-[10px] items-center"><span class="-mt-[5px] ml-px bg-white pr-[2px] pl-1 text-black">1.15981</span></div>`
          : `<div class="flex items-center gap-[3px]"><i class="h-px w-[2px] bg-white"></i>${(p / 100000).toFixed(5)}</div>`;
      }
      document.getElementById("prices").innerHTML = prices;

      let times = "";
      for (let i = 0; i < 24; i++) {
        const m = 9 * 60 + 28 + i * 16;
        const label = i ? String(Math.floor(m / 60)).padStart(2, "0") + ":" + String(m % 60).padStart(2, "0") : "2025";
        times += `<span class="w-16 shrink-0 whitespace-nowrap"><i class="block h-[3px] border-l border-white"></i>18 Nov ${label}</span>`;
      }
      document.getElementById("times").innerHTML = times;

      const alerts = [
        ["15:39:00", "EURUSD - Price touched Swing High at 1.15980 (Sydney)"],
        ["15:33:38", "EURUSD - Price touched Swing Low at 1.15929 (Tokyo)"],
        ["15:33:38", "EURUSD - Price touched Swing Low line at 1.15929 (Tokyo session)"],
        ["15:33:38", "EURUSD - Price touched Swing Low line at 1.15929 (Sydney session)"],
        ["15:31:51", "EURUSD - Price touched Swing Low at 1.15947 (Tokyo)"],
      ];
      document.getElementById("alerts").innerHTML = alerts.map(([time, text]) =>
        `<tr class="border-b border-[#c8c8c8] odd:bg-[#e9e9e9]">
          <td class="border-r border-[#c8c8c8] p-0"><span class="flex h-[19px] items-center gap-[6px] pt-px pl-1"><svg class="h-[13px] w-[13px]"><use href="#bell"/></svg>${time}</span></td>
          <td class="pt-px pl-1 leading-[18px]">${text}</td>
        </tr>`).join("");
    </script>
  </body>
</html>
